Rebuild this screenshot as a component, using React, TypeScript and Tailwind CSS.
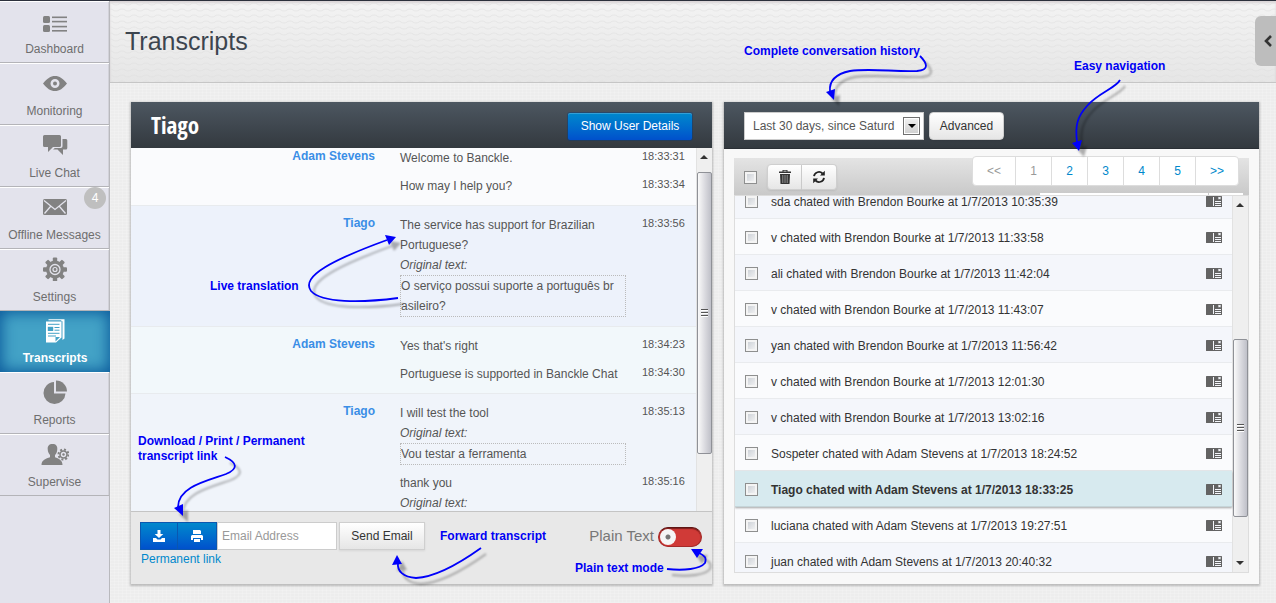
import React from "react";

type IconProps = { children: React.ReactNode };

function NavIcon({ children }: IconProps) {
  return (
    <svg viewBox="0 0 28 24" className="h-6 w-7" fill="currentColor" aria-hidden="true">
      {children}
    </svg>
  );
}

const GEAR_TEETH = [0, 45, 90, 135, 180, 225, 270, 315];

const icons: Record<string, React.ReactNode> = {
  Dashboard: (
    <NavIcon>
      <rect x="2" y="7" width="7" height="7" rx="1.5" />
      <rect x="2" y="16" width="7" height="7" rx="1.5" />
      <rect x="11" y="7.5" width="15" height="1.6" />
      <rect x="11" y="11.8" width="15" height="1.6" />
      <rect x="11" y="16.8" width="15" height="1.6" />
      <rect x="11" y="21" width="15" height="1.6" />
    </NavIcon>
  ),
  Monitoring: (
    <NavIcon>
      <path
        fillRule="evenodd"
        d="M2 12.5C6 7.5 9.5 5 14 5s8 2.500 12 7.500c-4 5-7.500 7.500-12 7.500S6 17.500 2 12.500zM14 8a4.500 4.500 0 1 0 0 9 4.500 4.500 0 0 0 0-9z"
      />
      <circle cx="14" cy="12.500" r="2" />
    </NavIcon>
  ),
  "Live Chat": (
    <NavIcon>
      <path d="M3.500 2h15A1.500 1.500 0 0 1 20 3.500v9a1.500 1.500 0 0 1-1.500 1.500H12l-5 5v-5H3.500A1.500 1.500 0 0 1 2 12.500v-9A1.500 1.500 0 0 1 3.500 2z" />
      <path d="M21.500 6H25a1.500 1.500 0 0 1 1.300 1.500V15a1.500 1.500 0 0 1-1.500 1.500H22V22l-5.500-5.500H12l1.800-1.500h6a1.700 1.700 0 0 0 1.700-1.700z" />
    </NavIcon>
  ),
  "Offline Messages": (
    <NavIcon>
      <rect x="2" y="4" width="24" height="16" rx="1.500" />
      <path d="M3 5.500l11 9 11-9M3.500 18.500l6-7M24.500 18.500l-6-7" fill="none" stroke="#e3e3ec" strokeWidth="1.300" />
    </NavIcon>
  ),
  Settings: (
    <NavIcon>
      {GEAR_TEETH.map((a) => (
        <rect key={a} x="11.800" y="0.500" width="4.400" height="6" rx="1" transform={`rotate(${a} 14 12.500)`} />
      ))}
      <circle cx="14" cy="12.500" r="9" />
      <circle cx="14" cy="12.500" r="5" fill="none" stroke="#e3e3ec" strokeWidth="1.300" />
      <circle cx="14" cy="12.500" r="2" fill="none" stroke="#e3e3ec" strokeWidth="1.200" />
    </NavIcon>
  ),
  Transcripts: (
    <NavIcon>
      <path d="M7.500 1.300V.3h16v19.200l-2 1.500V2.300h-1.200v-1z" />
      <path fillRule="evenodd" d="M5 2.500h15.500v16L15 23.500H5zM14.500 22.500v-4.500h4.500z" />
      <path d="M7 5.300h11.500M13.500 8.500h5M13.500 11.200h5M7 14.300h11.500M7 17h8" stroke="#43a2c6" strokeWidth="1" />
      <rect x="6.800" y="7.800" width="5.400" height="4.200" fill="#43a2c6" />
    </NavIcon>
  ),
  Reports: (
    <NavIcon>
      <path d="M13 2v11.500h11.500A11 11 0 1 1 13 2z" />
      <path d="M15 .5A11 11 0 0 1 26 11.500H15z" />
    </NavIcon>
  ),
  Supervise: (
    <NavIcon>
      <path d="M11.500 2c3.600 0 5 2 4.800 5.200-.1 3-1.300 5-2.300 5.800v2.200c3.500 1.500 7.500 2.500 7.500 7.800h-21C.5 17.700 5 16.700 9 15.200V13C8 12 6.800 10 6.700 7.200 6.500 4 8 2 11.500 2z" />
      <circle cx="22.500" cy="12.500" r="5" fill="none" stroke="currentColor" strokeWidth="2" strokeDasharray="2 1.900" />
      <circle cx="22.500" cy="12.500" r="3.500" fill="none" stroke="currentColor" strokeWidth="1.600" />
      <circle cx="22.500" cy="12.500" r="1.200" />
    </NavIcon>
  ),
};

const NAV = ["Dashboard", "Monitoring", "Live Chat", "Offline Messages", "Settings", "Transcripts", "Reports", "Supervise"];

function Sidebar() {
  return (
    <nav className="w-[110px] shrink-0 border-r border-[#b9b9bd] bg-[#e3e3ec] text-xs text-[#6e6e6e]">
      <ul>
        {NAV.map((name) => {
          const active = name === "Transcripts";
          return (
            <li key={name} className="relative">
              <a
                href="#"
                className={
                  active
                    ? "-mr-px flex h-[61px] flex-col items-center gap-[7px] bg-[#43a2c6] pt-2 font-bold text-white shadow-[inset_0_0_14px_2px_#0d5c9c]"
                    : "flex h-[62px] flex-col items-center gap-2 border-t border-b border-t-white border-b-[#b4b4b8] pt-[7px] shadow-[inset_-1px_0_0_#d2d2d9]"
                }
              >
                <span className={active ? "text-white" : "text-[#828282]"}>{icons[name]}</span>
                <span className="leading-4 whitespace-nowrap">{name}</span>
              </a>
              {name === "Offline Messages" && (
                <span className="absolute top-0 right-[3px] flex size-[22px] items-center justify-center rounded-full bg-[#bfbfbf] text-white">
                  4
                </span>
              )}
            </li>
          );
        })}
      </ul>
    </nav>
  );
}

function Waves() {
  return (
    <svg className="absolute inset-0 size-full" aria-hidden="true">
      <defs>
        <pattern id="waves" width="12" height="6" patternUnits="userSpaceOnUse">
          <path d="M0 2c3 0 3 2 6 2s3-2 6-2" fill="none" stroke="#dedede" strokeWidth="1" />
        </pattern>
      </defs>
      <rect width="100%" height="100%" fill="url(#waves)" opacity="0.6" />
    </svg>
  );
}

type Line = { text: string; time: string; translated?: boolean; original?: React.ReactNode };
type Group = { who: string; tone: string; lines: Line[] };

const GROUPS: Group[] = [
  {
    who: "Adam Stevens",
    tone: "bg-[#fafbfd] pt-0",
    lines: [
      { text: "Welcome to Banckle.", time: "18:33:31" },
      { text: "How may I help you?", time: "18:33:34" },
    ],
  },
  {
    who: "Tiago",
    tone: "bg-[#edf2fb] pt-[9px]",
    lines: [
      {
        text: "The service has support for Brazilian Portuguese?",
        time: "18:33:56",
        translated: true,
        original: (
          <>
            O serviço possui suporte a português br
            <br />
            asileiro?
          </>
        ),
      },
    ],
  },
  {
    who: "Adam Stevens",
    tone: "bg-[#f2f8fb] pt-[9px]",
    lines: [
      { text: "Yes that's right", time: "18:34:23" },
      { text: "Portuguese is supported in Banckle Chat", time: "18:34:30" },
    ],
  },
  {
    who: "Tiago",
    tone: "bg-[#f0f4fa] pt-[9px]",
    lines: [
      { text: "I will test the tool", time: "18:35:13", translated: true, original: "Vou testar a ferramenta" },
      { text: "thank you", time: "18:35:16", translated: true },
    ],
  },
];

function ScrollBar({ before, thumb, after }: { before: string; thumb: string; after: boolean }) {
  return (
    <div className="flex w-4 shrink-0 flex-col items-center bg-[#efefef] shadow-[inset_1px_0_0_#e2e2e2]" aria-hidden="true">
      <div className={before}>
        <svg viewBox="0 0 8 4" className="mt-[7px] h-1 w-2" fill="#333">
          <path d="M4 0l4 4H0z" />
        </svg>
      </div>
      <div
        className={
          thumb +
          " flex w-[15px] shrink-0 flex-col items-center justify-center gap-px rounded-xs border border-[#8f9197] bg-linear-to-r from-[#fafafa] via-[#dcdce1] to-[#bfc0c8]"
        }
      >
        <span className="h-0.5 w-[7px] border-b border-white bg-[#555]" />
        <span className="h-0.5 w-[7px] border-b border-white bg-[#555]" />
        <span className="h-0.5 w-[7px] border-b border-white bg-[#555]" />
      </div>
      {after && (
        <svg viewBox="0 0 8 4" className="mt-auto mb-[7px] h-1 w-2" fill="#333">
          <path d="M0 0h8L4 4z" />
        </svg>
      )}
    </div>
  );
}

const WHITE_BTN =
  "border border-[#cfcfcf] bg-linear-to-b from-white to-[#e6e6e6] text-[#333] shadow-[0_1px_2px_rgba(0,0,0,0.08)]";
const BLUE_BTN =
  "flex h-7 items-center justify-center border border-[#0a57b0] bg-linear-to-b from-[#0088cc] to-[#0050cc] text-white";
const HEAD = "flex h-[46px] items-center bg-linear-to-b from-[#4d5761] to-[#33393f] px-5 shadow-[0_1px_0_#2a2f35]";
const PANEL = "flex flex-col shadow-[0_1px_2px_1px_rgba(0,0,0,0.22)]";

function Conversation() {
  return (
    <section className={PANEL + " bg-[#e8e8e8]"}>
      <header className={HEAD + " justify-between"}>
        <h2 className="font-['Open_Sans_Condensed','Roboto_Condensed',sans-serif] text-[23px] leading-8 font-bold text-white">
          Tiago
        </h2>
        <button className="mt-0.5 h-[27px] w-[124px] rounded-xs bg-linear-to-b from-[#0088cc] to-[#0050cc] text-xs text-white shadow-[inset_0_1px_0_rgba(255,255,255,0.2),0_0_0_1px_rgba(0,60,130,0.4)]">
          Show User Details
        </button>
      </header>
      <div className="flex h-[363px] overflow-hidden">
        <div className="min-w-0 flex-1">
          {GROUPS.map((g, i) => (
            <div key={i} className={g.tone + " flex border-b border-[#e8ebee] pr-3 pb-[9px]"}>
              <div className="flex-1 pr-[25px] text-right text-xs leading-4 font-bold text-[#3a8ee6]">{g.who}</div>
              <div className="flex flex-col gap-2">
                {g.lines.map((l) => (
                  <div key={l.time} className="flex items-start gap-4">
                    <div className="w-[226px] text-xs leading-5 text-[#555]">
                      <p>{l.text}</p>
                      {l.translated && <p className="italic">Original text:</p>}
                      {l.original && <p className="border border-dotted border-[#bbb]">{l.original}</p>}
                    </div>
                    <time className="w-[42px] text-[11px] leading-4 text-[#555]">{l.time}</time>
                  </div>
                ))}
              </div>
            </div>
          ))}
        </div>
        <ScrollBar before="h-6 shrink-0" thumb="h-[282px]" after={false} />
      </div>
      <footer className="flex items-start justify-between border-t border-[#c4c4c4] pt-[10px] pr-[10px] pb-4 pl-[9px] text-xs">
        <div>
          <div className="flex">
            <button aria-label="Download" className={BLUE_BTN + " w-[38px]"}>
              <svg viewBox="0 0 12 12" className="size-3" fill="currentColor">
                <path d="M4.500 0h3v4h2.800L6 8 1.700 4h2.800z" />
                <path d="M0 8h3l1.500 1.500h3L9 8h3v4H0z" />
              </svg>
            </button>
            <button aria-label="Print" className={BLUE_BTN + " w-[39px] border-l-0"}>
              <svg viewBox="0 0 12 12" className="size-3" fill="currentColor">
                <path d="M2 0h7l1 1v3H2z" />
                <path d="M1 5h10l1 1v4h-2V8H2v2H0V6z" />
                <path d="M3 9h6v3H3z" />
              </svg>
            </button>
            <input
              type="email"
              aria-label="Email Address"
              placeholder="Email Address"
              className="h-7 w-[120px] border border-[#ccc] bg-white px-1 text-xs placeholder:text-[#999]"
            />
            <button className={WHITE_BTN + " ml-0.5 h-7 w-[86px]"}>Send Email</button>
          </div>
          <a href="#" className="ml-px block leading-[18px] text-[#0088cc]">
            Permanent link
          </a>
        </div>
        <label className="flex h-7 items-center gap-1 text-[15px] leading-5 text-[#777]">
          Plain Text
          <input
            type="checkbox"
            className="mt-0.5 flex h-5 w-11 appearance-none items-center rounded-full border border-[#a52a28] border-t-[#5e1514] bg-[#d03a37] px-px shadow-[inset_0_1px_1px_#7c1d1b] before:size-4 before:rounded-full before:bg-[radial-gradient(circle,#777_0_2px,#f6f6f6_3px)] before:content-['']"
          />
        </label>
      </footer>
    </section>
  );
}

const ROWS = [
  "sda chated with Brendon Bourke at 1/7/2013 10:35:39",
  "v chated with Brendon Bourke at 1/7/2013 11:33:58",
  "ali chated with Brendon Bourke at 1/7/2013 11:42:04",
  "v chated with Brendon Bourke at 1/7/2013 11:43:07",
  "yan chated with Brendon Bourke at 1/7/2013 11:56:42",
  "v chated with Brendon Bourke at 1/7/2013 12:01:30",
  "v chated with Brendon Bourke at 1/7/2013 13:02:16",
  "Sospeter chated with Adam Stevens at 1/7/2013 18:24:52",
  "Tiago chated with Adam Stevens at 1/7/2013 18:33:25",
  "luciana chated with Adam Stevens at 1/7/2013 19:27:51",
  "juan chated with Adam Stevens at 1/7/2013 20:40:32",
];

const CHECK =
  "size-[13px] shrink-0 appearance-none border border-[#8e8f8f] bg-linear-to-br from-[#c6cbd2] to-[#f8f8f8] shadow-[inset_0_0_0_2px_#f4f4f4]";

const PAGES = [
  { label: "<<", cls: "w-[42px] text-[#999]" },
  { label: "1", cls: "w-[35px] text-[#999]" },
  { label: "2", cls: "w-[35px] text-[#0088cc]" },
  { label: "3", cls: "w-[35px] text-[#0088cc]" },
  { label: "4", cls: "w-[35px] text-[#0088cc]" },
  { label: "5", cls: "w-[35px] text-[#0088cc]" },
  { label: ">>", cls: "w-[42px] text-[#0088cc]" },
];

function History() {
  return (
    <section className={PANEL + " bg-[#f8f8f8]"}>
      <header className={HEAD + " gap-[5px]"}>
        <div className="relative mt-0.5">
          <select
            aria-label="Period"
            className="block h-7 w-[180px] appearance-none border border-[#ccc] bg-white pr-6 pl-2 text-xs text-[#555]"
          >
            <option>Last 30 days, since Saturd</option>
          </select>
          <span className="pointer-events-none absolute top-[5px] right-1 flex h-[18px] w-[17px] items-center justify-center border border-[#707070] bg-linear-to-b from-[#f2f2f2] to-[#cfcfcf] shadow-[inset_0_0_0_1px_#fff]">
            <svg viewBox="0 0 8 4" className="h-1 w-2">
              <path d="M0 0h8L4 4z" />
            </svg>
          </span>
        </div>
        <button className={WHITE_BTN + " mt-0.5 h-7 w-[75px] rounded-sm text-xs"}>Advanced</button>
      </header>
      <div className="flex flex-1 flex-col px-[10px] pt-[10px] pb-[11px]">
        <div className="relative flex h-[37px] items-start justify-between bg-linear-to-b from-[#e4e4e4] to-[#c9c9c9] px-[10px]">
          <div className="flex items-center pt-[6px]">
            <input type="checkbox" aria-label="Select all" className={CHECK} />
            <div className="ml-[10px] flex">
              <button aria-label="Delete" className={WHITE_BTN + " flex h-[26px] w-[35px] items-center justify-center rounded-l-sm"}>
                <svg viewBox="0 0 12 14" className="h-3.5 w-3" fill="#333">
                  <path fillRule="evenodd" d="M3.500 0h5v1.500H12V3H0V1.500h3.500zM4.500.8v.7h3V.8z" />
                  <path d="M1 4h10l-.5 10h-9z" />
                  <path d="M3.800 5v8M6 5v8M8.200 5v8" stroke="#aaa" strokeWidth="0.800" />
                </svg>
              </button>
              <button
                aria-label="Refresh"
                className={WHITE_BTN + " flex h-[26px] w-[35px] items-center justify-center rounded-r-sm border-l-0"}
              >
                <svg viewBox="0 0 14 14" className="size-3.5" fill="none" stroke="#222" strokeWidth="1.800">
                  <path d="M2 6.200A5 5 0 0 1 10.500 3.500M12 7.800A5 5 0 0 1 3.500 10.500" />
                  <path d="M12.800.8v4.800H8zM1.200 13.200V8.400H6z" fill="#222" stroke="none" />
                </svg>
              </button>
            </div>
          </div>
          <ul className="z-10 -mt-0.5 flex h-[30px] rounded-sm border border-[#ddd] bg-white text-xs">
            {PAGES.map((p) => (
              <li key={p.label} className="flex border-r border-[#ddd] last:border-r-0">
                <a href="#" className={p.cls + " flex items-center justify-center"}>
                  {p.label}
                </a>
              </li>
            ))}
          </ul>
          <div className="absolute right-[6px] bottom-0 flex h-0.5 gap-px" aria-hidden="true">
            <span className="w-[168px] bg-white" />
            <span className="w-[34px] bg-white" />
          </div>
        </div>
        <div className="flex h-[378px] overflow-hidden border border-[#ddd]">
          <ul className="min-w-0 flex-1">
            {ROWS.map((r, i) => {
              const sel = i === 8;
              return (
                <li
                  key={r}
                  className={
                    sel
                      ? "relative border-b border-[#c5d5d9] bg-[#d7eaef] font-bold shadow-[0_1px_2px_rgba(0,0,0,0.35)]"
                      : "border-b border-[#e9ebee] odd:bg-[#f4f6fb] even:bg-[#fafbfd] first:-mt-[13px]"
                  }
                >
                  <label className="flex h-[35px] items-center px-[10px] pt-0.5 text-xs text-[#333]">
                    <input type="checkbox" className={CHECK} />
                    <span className="ml-[13px] flex-1 whitespace-nowrap">{r}</span>
                    <svg viewBox="0 0 16 11" className="h-[11px] w-4">
                      <rect width="16" height="11" rx="0.500" fill="#636363" />
                      <path d="M7.500 1v9M9 5.500h6M9 7.500h6M9 9.500h6" stroke="#f4f6fb" />
                      <path d="M12.500 1.200l2 2m0-2l-2 2" stroke="#f4f6fb" strokeWidth="1.200" />
                    </svg>
                  </label>
                </li>
              );
            })}
          </ul>
          <ScrollBar before="h-[143px] shrink-0" thumb="h-[178px]" after />
        </div>
      </div>
    </section>
  );
}

const NOTES = [
  {
    text: "Complete conversation history",
    pos: "left-[744px] top-[44px]",
    line: "M920 56C927 63 930 70 917 71C895 72 870 68 850 71C836 74 829 80 830 91",
    head: "M826 92L835 89L834 100z",
  },
  {
    text: "Easy navigation",
    pos: "left-[1074px] top-[59px]",
    line: "M1120 80C1116 88 1098 93 1087 106C1077 117 1075 126 1077 142",
    head: "M1072 143L1082 140L1079 151z",
  },
  {
    text: "Live translation",
    pos: "left-[210px] top-[279px]",
    line: "M398 298C360 303 322 303 311 291C300 276 335 259 387 240",
    head: "M385 235L396 237L389 245z",
  },
  {
    text: "Download / Print / Permanent transcript link",
    pos: "left-[138px] top-[434px] w-[176px]",
    line: "M225 457C238 463 238 469 226 474C206 481 178 487 178 507",
    head: "M174 508L183 504L183 516z",
  },
  {
    text: "Forward transcript",
    pos: "left-[440px] top-[529px]",
    line: "M481 548C460 563 436 577 416 578C403 577 397 571 398 563",
    head: "M392 565L397 555L402 564z",
  },
  {
    text: "Plain text mode",
    pos: "left-[575px] top-[561px]",
    line: "M667 569C684 571 700 569 705 563C707 558 704 555 699 553",
    head: "M691 549L703 549L697 558z",
  },
];

function Notes() {
  return (
    <div className="pointer-events-none absolute inset-x-0 -top-px bottom-0 z-20 overflow-hidden">
      <svg
        className="absolute top-0 left-0 h-[603px] w-[1276px] drop-shadow-[5px_6px_1px_rgba(0,0,0,0.3)]"
        fill="none"
        aria-hidden="true"
      >
        {NOTES.map((n) => (
          <g key={n.text}>
            <path d={n.line} stroke="#0000fa" strokeWidth="1.800" />
            <path d={n.head} fill="#0000fa" />
          </g>
        ))}
      </svg>
      {NOTES.map((n) => (
        <p key={n.text} className={n.pos + " absolute text-xs leading-[15px] font-bold text-[#0000f5]"}>
          {n.text}
        </p>
      ))}
    </div>
  );
}

export default function App() {
  return (
    <div className="relative flex min-h-screen flex-col border-t border-[#2c313c] bg-[#ededed] font-['Liberation_Sans',Arial,sans-serif]">
      <div className="flex flex-1">
        <Sidebar />
        <div className="min-w-0 flex-1 bg-[repeating-linear-gradient(0deg,rgba(255,255,255,0.16)_0_1px,transparent_1px_3px),repeating-linear-gradient(90deg,rgba(255,255,255,0.16)_0_1px,transparent_1px_4px)]">
          <header className="relative flex h-[82px] items-start justify-between border-b border-[#c6c6c6] bg-linear-to-b from-[#f3f3f3] to-[#e6e6e6] shadow-[inset_0_2px_2px_rgba(80,50,60,0.15)]">
            <Waves />
            <h1 className="relative pt-6 pl-[15px] text-[25px] leading-8 text-[#3c454f]">Transcripts</h1>
            <button
              aria-label="Open side panel"
              className="relative mt-[15px] flex h-[50px] w-[21px] items-center justify-center rounded-l-md bg-[#bdbdbd]"
            >
              <svg viewBox="0 0 8 12" className="ml-1 h-3 w-2" fill="none" stroke="#333" strokeWidth="2.600">
                <path d="M7 1L2 6l5 5" />
              </svg>
            </button>
          </header>
          <main className="grid grid-cols-[581fr_535fr] gap-3 pt-[19px] pr-[17px] pb-[19px] pl-[21px]">
            <Conversation />
            <History />
          </main>
        </div>
      </div>
      <Notes />
    </div>
  );
}
